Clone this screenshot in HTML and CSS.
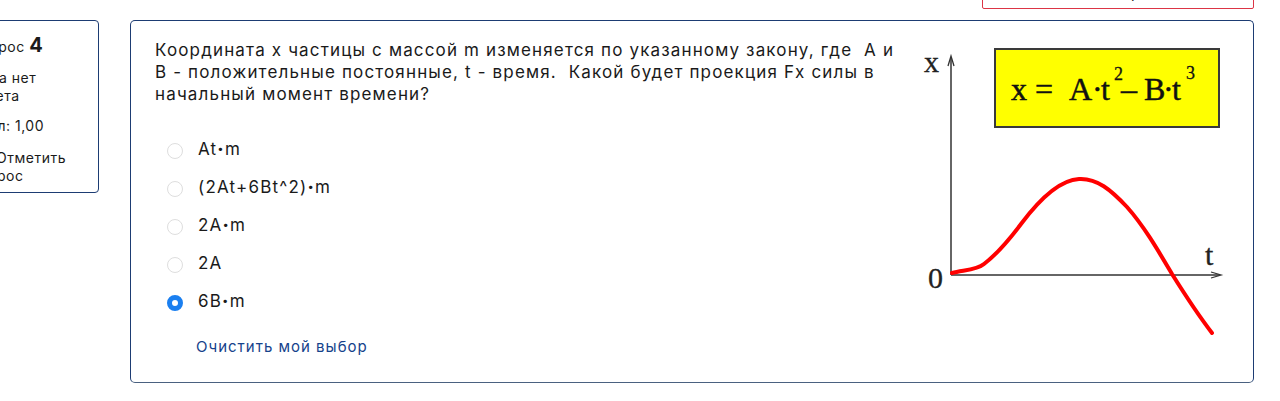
FILE: index.html
```html
<!DOCTYPE html>
<html lang="ru">
<head>
<meta charset="utf-8">
<link rel="stylesheet" href="styles.css">
</head>
<body>
<div class="page">
  <div class="topbar">
    <div class="timer">Оставшееся время 0:29:38</div>
  </div>
  <div class="que">
    <div class="info">
      <h3 class="no">Вопрос <span class="qno">4</span></h3>
      <div class="state">Пока нет ответа</div>
      <div class="grade">Балл: 1,00</div>
      <div class="flag"><svg class="flag-icon" width="14" height="14" viewBox="0 0 16 16"><path d="M3 1v14M3 2h9l-2 3 2 3H3" fill="none" stroke="#333" stroke-width="1.4"/></svg>Отметить вопрос</div>
    </div>
    <div class="content">
      <div class="qtext">
        <svg class="graph" width="310" height="312" viewBox="920 28 310 312">
          <line x1="952" y1="275" x2="952" y2="58" stroke="#333" stroke-width="1.5"/>
          <path d="M949 66 L952 56 L955 66" fill="none" stroke="#333" stroke-width="1.3"/>
          <line x1="952" y1="275" x2="1221" y2="275" stroke="#333" stroke-width="1.5"/>
          <path d="M1212 272 L1222 275 L1212 278" fill="none" stroke="#333" stroke-width="1.3"/>
          <text x="925" y="72" class="axis-label">x</text>
          <text x="1206" y="265" class="axis-label">t</text>
          <text x="929" y="288" class="axis-label">0</text>
          <rect x="996" y="49" width="224" height="78" fill="#ffff00" stroke="#3a3a3a" stroke-width="2"/>
          <g class="formula">
            <text x="1012" y="100">x</text>
            <text x="1036" y="100">=</text>
            <text x="1070" y="100">A</text>
            <text x="1093" y="100">·</text>
            <text x="1102" y="100">t</text>
            <text x="1115" y="80" class="sup">2</text>
            <text x="1122" y="100">–</text>
            <text x="1145" y="100">B</text>
            <text x="1164" y="100">·</text>
            <text x="1173" y="100">t</text>
            <text x="1187" y="79" class="sup">3</text>
          </g>
          <path d="M953 273 C965 270 978 270 985 264 C998 254 1010 240 1022 224 C1040 200 1060 180 1080 179 C1098 178 1112 190 1128 207 C1145 226 1160 252 1173 274 C1188 298 1200 316 1213 333" fill="none" stroke="#ff0000" stroke-width="4" stroke-linecap="round"/>
        </svg>
        <p>Координата х частицы с массой m изменяется по указанному закону, где&nbsp; А и В - положительные постоянные, t - время.&nbsp; Какой будет проекция Fx силы в начальный момент времени?</p>
      </div>
      <div class="answers">
        <label class="opt"><span class="radio"></span><span>At<b class="dot">·</b>m</span></label>
        <label class="opt"><span class="radio"></span><span>(2At+6Bt^2)<b class="dot">·</b>m</span></label>
        <label class="opt"><span class="radio"></span><span>2A<b class="dot">·</b>m</span></label>
        <label class="opt"><span class="radio"></span><span>2A</span></label>
        <label class="opt"><span class="radio checked"></span><span>6B<b class="dot">·</b>m</span></label>
      </div>
      <a class="clear" href="#">Очистить мой выбор</a>
    </div>
  </div>
</div>
</body>
</html>
```
FILE: styles.css
```css
* { box-sizing: border-box; }
html, body { margin: 0; padding: 0; background: #fff; }
body {
  font-family: Inter, "Noto Sans", sans-serif;
  color: #1a1a1a;
  overflow: hidden;
}
.page {
  padding: 0 26px 0 0;
}
.topbar {
  display: flex;
  justify-content: flex-end;
  height: 9px;
}
.timer {
  width: 272px;
  height: 32px;
  margin-top: -23px;
  border: 1px solid #dc3545;
  border-radius: 2px;
  text-align: center;
  font-size: 15px;
  line-height: 30px;
  padding-left: 20px;
}
.que {
  display: flex;
  gap: 31px;
  margin-top: 11px;
  margin-left: -60px;
}
.info {
  flex: 0 0 159px;
  height: 173px;
  border: 1px solid #1d3c73;
  border-radius: 4px;
  padding: 12px 18px 8px 30px;
  font-size: 14px;
  line-height: 18px;
  letter-spacing: 0.5px;
}
.no {
  margin: 0 0 10px;
  font-size: 14px;
  font-weight: 400;
  line-height: 24px;
}
.qno {
  font-size: 20px;
  font-weight: 700;
}
.state { margin-bottom: 12px; }
.grade { margin-bottom: 14px; }
.flag-icon { margin-right: 11px; vertical-align: -2px; }
.content {
  flex: 1;
  height: 363px;
  border: 1px solid #1d3c73;
  border-bottom-color: #4a6180;
  border-radius: 5px;
  padding: 18px 24px 0 24px;
}
.qtext { font-size: 17px; line-height: 22px; letter-spacing: 1.15px; }
.qtext p { margin: 0; }
.graph { float: right; margin: -11px 0 0 10px; }
.axis-label { font-family: "Liberation Serif", serif; font-size: 30px; fill: #222; stroke: #222; stroke-width: 0.3; letter-spacing: 0; }
.formula text { font-family: "Liberation Serif", serif; font-size: 32px; fill: #111; stroke: #111; stroke-width: 0.5; letter-spacing: 0; }
.formula text.sup { font-size: 18px; stroke-width: 0.3; }
.answers {
  margin-top: 33px;
  display: flex;
  flex-direction: column;
  gap: 16px;
}
.opt {
  display: flex;
  align-items: center;
  gap: 15px;
  height: 22px;
  font-size: 17px;
  letter-spacing: 1.2px;
  padding-left: 12px;
}
.dot { font-weight: 900; }
.radio {
  width: 16px;
  height: 16px;
  border-radius: 50%;
  border: 1px solid #dedede;
  margin-top: 4px;
  flex: none;
}
.radio.checked {
  border: 5px solid #1a7ff0;
  background: #fff;
}
.clear {
  display: block;
  margin-top: 25px;
  padding-left: 41px;
  font-size: 15px;
  letter-spacing: 1px;
  color: #15428b;
  text-decoration: none;
}
```
